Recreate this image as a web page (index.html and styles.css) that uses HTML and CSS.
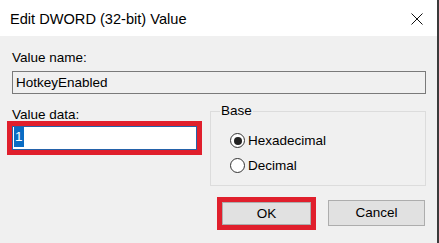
FILE: index.html
```html
<!DOCTYPE html>
<html>
<head>
<meta charset="utf-8">
<link rel="stylesheet" href="styles.css">
</head>
<body>
<div class="window">
  <div class="titlebar">
    <span class="title">Edit DWORD (32-bit) Value</span>
    <svg class="close" width="12" height="12" viewBox="0 0 12 12"><path d="M0.5 0.5 L11.5 11.5 M11.5 0.5 L0.5 11.5" stroke="#111" stroke-width="1" fill="none"/></svg>
  </div>
  <div class="content">
    <div class="label first">Value name:</div>
    <div class="textbox readonly">HotkeyEnabled</div>
    <div class="row">
      <div class="datacol">
        <div class="label">Value data:</div>
        <div class="textbox focused marked"><span class="sel">1</span></div>
      </div>
      <fieldset class="group">
        <legend>Base</legend>
        <div class="radio"><span class="dot checked"></span>Hexadecimal</div>
        <div class="radio"><span class="dot"></span>Decimal</div>
      </fieldset>
    </div>
    <div class="buttons">
      <div class="btn ok marked">OK</div>
      <div class="btn cancel">Cancel</div>
    </div>
  </div>
</div>
</body>
</html>
```
FILE: styles.css
```css
html, body {
  margin: 0;
  padding: 0;
  background: #f0f0f0;
}
body {
  font-family: "Liberation Sans", Arial, sans-serif;
  font-size: 13.5px;
  color: #000;
}
.window {
  width: 437px;
  height: 243px;
  border-right: 2px solid #3a3a3a;
  background: #f0f0f0;
  display: flex;
  flex-direction: column;
}
.titlebar {
  height: 36px;
  background: #fff;
  display: flex;
  align-items: center;
  justify-content: space-between;
  padding: 0 14px 0 10px;
  flex: none;
}
.title {
  font-size: 14.6px;
  color: #000;
  margin-top: 2px;
}
.close {
  margin-top: 1px;
}
.content {
  padding: 0 11px 0 12px;
}
.label {
  line-height: 16px;
  height: 16px;
}
.label.first {
  margin-top: 14px;
  margin-bottom: 5px;
}
.textbox {
  box-sizing: border-box;
  height: 23px;
  border: 1px solid #7a7a7a;
  line-height: 21px;
  padding-left: 3px;
  white-space: nowrap;
}
.textbox.readonly {
  background: #f0f0f0;
}
.row {
  display: flex;
  align-items: flex-start;
  margin-top: 9px;
}
.datacol {
  width: 185px;
  padding-top: 4px;
}
.datacol .label {
  margin-bottom: 3px;
}
.textbox.focused {
  height: 24px;
  background: #fff;
  border-color: #2462aa;
  padding-left: 1px;
  line-height: 20px;
}
.marked {
  outline: 5px solid #e01f2c;
}
.sel {
  display: inline-block;
  background: #0a6cc4;
  color: #fff;
  line-height: 20px;
  padding: 0 1px;
  vertical-align: top;
}
.group {
  margin: 1px 0 0 13px;
  flex: 1;
  box-sizing: border-box;
  height: 82px;
  border: 1px solid #dcdcdc;
  padding: 0 0 0 19px;
}
.group legend {
  padding: 0 1px;
  margin-left: -10px;
  line-height: 14px;
}
.radio {
  display: flex;
  align-items: center;
  height: 25px;
}
.radio:first-of-type {
  margin-top: 10px;
}
.dot {
  box-sizing: border-box;
  width: 15px;
  height: 15px;
  border: 1px solid #333;
  border-radius: 50%;
  background: #fff;
  margin-right: 3px;
  display: flex;
  align-items: center;
  justify-content: center;
}
.dot.checked::after {
  content: "";
  width: 8px;
  height: 8px;
  border-radius: 50%;
  background: #222;
}
.buttons {
  display: flex;
  justify-content: flex-end;
  align-items: center;
  margin-top: 14px;
  gap: 17px;
  padding-right: 1px;
}
.btn {
  box-sizing: border-box;
  height: 26px;
  line-height: 24px;
  text-align: center;
  background: #e1e1e1;
  border: 1px solid #adadad;
}
.btn.ok {
  width: 89px;
  height: 23px;
  line-height: 21px;
}
.btn.cancel {
  width: 97px;
}
```
